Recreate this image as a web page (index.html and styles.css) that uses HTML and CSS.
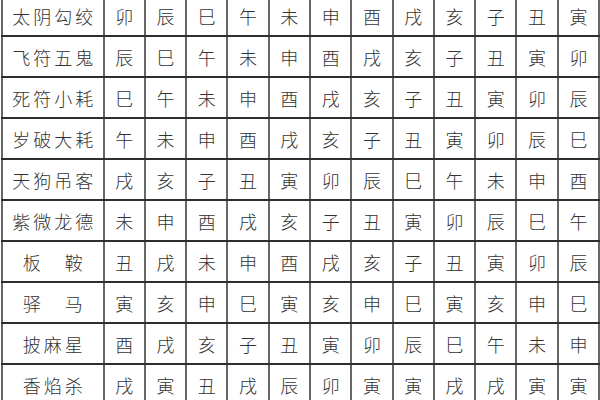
FILE: index.html
```html
<!DOCTYPE html>
<html lang="zh-CN">
<head>
<meta charset="utf-8">
<link rel="stylesheet" href="styles.css">
</head>
<body>
<table class="gods">
  <colgroup>
    <col class="c-name">
    <col><col><col><col><col><col><col><col><col><col><col><col>
  </colgroup>
  <tbody>
    <tr><td class="name">太阴勾绞</td><td>卯</td><td>辰</td><td>巳</td><td>午</td><td>未</td><td>申</td><td>酉</td><td>戌</td><td>亥</td><td>子</td><td>丑</td><td>寅</td></tr>
    <tr><td class="name">飞符五鬼</td><td>辰</td><td>巳</td><td>午</td><td>未</td><td>申</td><td>酉</td><td>戌</td><td>亥</td><td>子</td><td>丑</td><td>寅</td><td>卯</td></tr>
    <tr><td class="name">死符小耗</td><td>巳</td><td>午</td><td>未</td><td>申</td><td>酉</td><td>戌</td><td>亥</td><td>子</td><td>丑</td><td>寅</td><td>卯</td><td>辰</td></tr>
    <tr><td class="name">岁破大耗</td><td>午</td><td>未</td><td>申</td><td>酉</td><td>戌</td><td>亥</td><td>子</td><td>丑</td><td>寅</td><td>卯</td><td>辰</td><td>巳</td></tr>
    <tr><td class="name">天狗吊客</td><td>戌</td><td>亥</td><td>子</td><td>丑</td><td>寅</td><td>卯</td><td>辰</td><td>巳</td><td>午</td><td>未</td><td>申</td><td>酉</td></tr>
    <tr><td class="name">紫微龙德</td><td>未</td><td>申</td><td>酉</td><td>戌</td><td>亥</td><td>子</td><td>丑</td><td>寅</td><td>卯</td><td>辰</td><td>巳</td><td>午</td></tr>
    <tr><td class="name">板　鞍</td><td>丑</td><td>戌</td><td>未</td><td>申</td><td>酉</td><td>戌</td><td>亥</td><td>子</td><td>丑</td><td>寅</td><td>卯</td><td>辰</td></tr>
    <tr><td class="name">驿　马</td><td>寅</td><td>亥</td><td>申</td><td>巳</td><td>寅</td><td>亥</td><td>申</td><td>巳</td><td>寅</td><td>亥</td><td>申</td><td>巳</td></tr>
    <tr><td class="name">披麻星</td><td>酉</td><td>戌</td><td>亥</td><td>子</td><td>丑</td><td>寅</td><td>卯</td><td>辰</td><td>巳</td><td>午</td><td>未</td><td>申</td></tr>
    <tr><td class="name">香焰杀</td><td>戌</td><td>寅</td><td>丑</td><td>戌</td><td>辰</td><td>卯</td><td>寅</td><td>寅</td><td>戌</td><td>戌</td><td>寅</td><td>寅</td></tr>
  </tbody>
</table>
</body>
</html>
```

FILE: styles.css
```css
html, body {
  margin: 0;
  padding: 0;
  background: #ffffff;
  overflow: hidden;
}

body {
  font-family: "Noto Sans CJK SC", "Noto Sans", sans-serif;
  color: #333333;
}

.gods {
  border-collapse: collapse;
  table-layout: fixed;
  width: 599px;
  margin: -6px 0 0 1px;
}

.gods col {
  width: 41.3px;
}

.gods col.c-name {
  width: 101.5px;
}

.gods td {
  height: 39px;
  padding: 0;
  text-align: center;
  vertical-align: middle;
  font-size: 18px;
  line-height: 20px;
  font-weight: 300;
  border-top: 2px solid #2e2e2e;
  border-bottom: 2px solid #2e2e2e;
  border-left: 2px solid #666666;
  border-right: 2px solid #666666;
  white-space: nowrap;
}

.gods td.name {
  letter-spacing: 3px;
  padding-left: 3px;
}
```
